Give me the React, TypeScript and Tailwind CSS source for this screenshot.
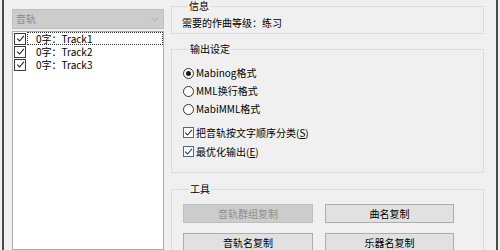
import React from 'react';

const tracks = ['Track1', 'Track2', 'Track3'];

const Check: React.FC<{ blue?: boolean }> = ({ blue }) => (
	<span
		className={
			blue
				? 'flex h-[11px] w-[11px] shrink-0 items-center justify-center border border-[#4a6896] bg-white'
				: 'flex h-[12px] w-[12px] shrink-0 items-center justify-center border border-[#3a3a3a] bg-white'
		}
	>
		<svg width="9" height="9" viewBox="0 0 9 9">
			<path d="M1.2 4.6 L3.6 7 L7.9 1.8" fill="none" stroke={blue ? '#1d3a66' : '#222'} strokeWidth="1.1" />
		</svg>
	</span>
);

const Radio: React.FC<{ checked?: boolean; label: string }> = ({ checked, label }) => (
	<div className="flex h-[18px] items-center gap-[2px]">
		<span className="flex h-[11px] w-[11px] items-center justify-center rounded-full border border-[#333] bg-white">
			{checked && <span className="h-[5px] w-[5px] rounded-full bg-[#1a1a1a]" />}
		</span>
		<span>{label}</span>
	</div>
);

const Group: React.FC<{ title: string; className?: string; children: React.ReactNode }> = ({
	title,
	className,
	children,
}) => (
	<fieldset className={`border border-[#dcdcdc] ${className ?? ''}`}>
		<legend className="ml-[6px] px-[1px] leading-[12px]">{title}</legend>
		{children}
	</fieldset>
);

const Btn: React.FC<{ label: string; disabled?: boolean }> = ({ label, disabled }) => (
	<div
		className={
			disabled
				? 'flex h-[19px] items-center justify-center border border-[#bfbfbf] bg-[#cccccc] text-[#8f8f8f]'
				: 'flex h-[19px] items-center justify-center border border-[#adadad] bg-[#e1e1e1]'
		}
	>
		{label}
	</div>
);

export default function App() {
	return (
		<div className="flex h-[250px] w-[500px] overflow-hidden bg-[#f0f0f0] px-[2px] font-['Noto_Sans_CJK_SC',sans-serif] text-[10px] leading-[12px] text-black">
			<div className="flex flex-1 border-x-2 border-[#4a4a4a]">
				{/* left: track list */}
				<div className="ml-[8px] flex w-[152px] flex-col pt-[9px]">
					<div className="flex h-[20px] items-center justify-between border border-[#bfbfbf] bg-[#cccccc] pl-[3px] pr-[4px] text-[#8a8a8a]">
						<span>音轨</span>
						<svg width="8" height="5" viewBox="0 0 8 5">
							<path d="M0.5 0.5 L4 4 L7.5 0.5" fill="none" stroke="#a8a8a8" strokeWidth="1" />
						</svg>
					</div>
					<div className="mt-[2px] flex-1 border border-[#adadad] bg-white leading-[11px]">
						{tracks.map((t, i) => (
							<div key={t} className="flex h-[13px] items-center pl-[1px]">
								<Check />
								<span
									className={
										i === 0
											? 'ml-[1px] flex h-[13px] flex-1 items-center border border-dotted border-[#333] pl-[8px]'
											: 'ml-[1px] flex h-[13px] flex-1 items-center border border-transparent pl-[8px]'
									}
								>
									0字：{t}
								</span>
							</div>
						))}
					</div>
				</div>

				{/* right: settings */}
				<div className="ml-[7px] flex w-[313px] flex-col">
					<Group title="信息" className="pb-[4px] pl-[10px]">
						<div className="pt-[5px]">需要的作曲等级：练习</div>
					</Group>

					<Group title="输出设定" className="mt-[9px] pb-[11px] pl-[11px]">
						<div className="pt-[9px]">
							<Radio checked label="Mabinog格式" />
							<Radio label="MML换行格式" />
							<Radio label="MabiMML格式" />
							<div className="mt-[5px]">
								<div className="flex h-[19px] items-center gap-[2px]">
									<Check blue />
									<span>
										把音轨按文字顺序分类(<span className="underline">S</span>)
									</span>
								</div>
								<div className="flex h-[19px] items-center gap-[2px]">
									<Check blue />
									<span>
										最优化输出(<span className="underline">E</span>)
									</span>
								</div>
							</div>
						</div>
					</Group>

					<Group title="工具" className="mt-[10px] pl-[11px]">
						<div className="grid grid-cols-[130px_129px] gap-x-[12px] gap-y-[10px] pt-[9px]">
							<Btn label="音轨群组复制" disabled />
							<Btn label="曲名复制" />
							<Btn label="音轨名复制" />
							<Btn label="乐器名复制" />
						</div>
					</Group>
				</div>
			</div>
		</div>
	);
}
